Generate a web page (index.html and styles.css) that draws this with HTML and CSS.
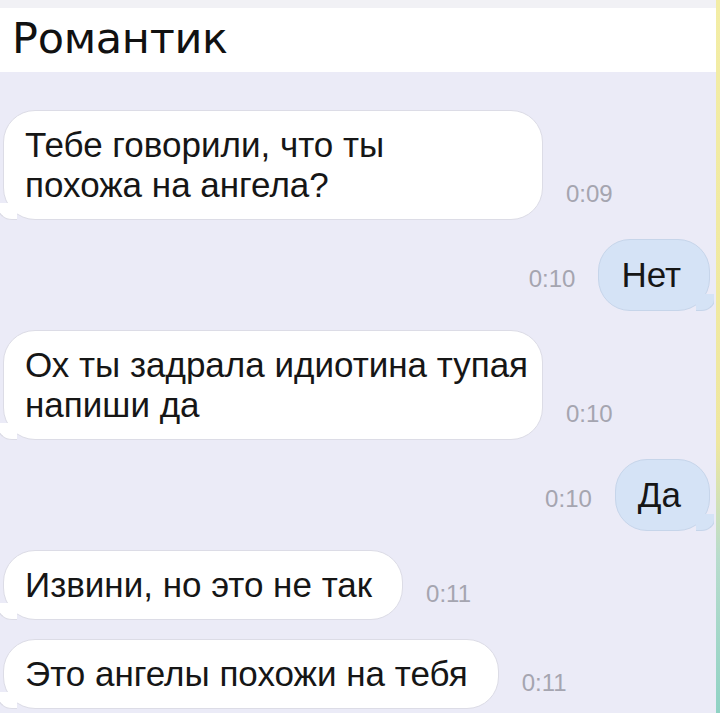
FILE: index.html
```html
<!DOCTYPE html>
<html>
<head>
  <meta charset="utf-8">
  <title>Романтик</title>
  <link rel="stylesheet" href="styles.css">
</head>
<body>
  <div class="page">
    <div class="topbar"></div>

    <header class="chat-header">
      <h1>Романтик</h1>
    </header>

    <main class="chat">
      <div class="row in">
        <div class="bubble wide">Тебе говорили, что ты<br>похожа на ангела?</div>
        <span class="time">0:09</span>
      </div>

      <div class="row out">
        <span class="time">0:10</span>
        <div class="bubble">Нет</div>
      </div>

      <div class="row in">
        <div class="bubble wide">Ох ты задрала идиотина тупая<br>напиши да</div>
        <span class="time">0:10</span>
      </div>

      <div class="row out">
        <span class="time">0:10</span>
        <div class="bubble">Да</div>
      </div>

      <div class="row in">
        <div class="bubble">Извини, но это не так</div>
        <span class="time">0:11</span>
      </div>

      <div class="row in">
        <div class="bubble">Это ангелы похожи на тебя</div>
        <span class="time">0:11</span>
      </div>
    </main>
  </div>
</body>
</html>
```

FILE: styles.css
```css
body {
  margin: 0;
  background: #ebebf7;
  font-family: "Liberation Sans", Arial, sans-serif;
  color: #161616;
}

.page {
  height: 713px;
  overflow: hidden;
  background: #ebebf7;
  border-right: 4px solid #efe9a0;
  border-image: linear-gradient(#f3eda6 0, #efe7a0 62%, #b8dccd 78%, #8fd2c4 100%) 1;
}

.topbar {
  height: 8px;
  background: #f1f1f5;
}

.chat-header {
  background: #fff;
  padding: 5px 12px 9px;
}

.chat-header h1 {
  margin: 0;
  font-family: "DejaVu Sans", Verdana, sans-serif;
  font-weight: normal;
  font-size: 43px;
  line-height: 50px;
  letter-spacing: -0.3px;
  color: #111;
}

.chat {
  display: flex;
  flex-direction: column;
  gap: 19px;
  padding: 38px 6px 0 3px;
}

.row {
  display: flex;
  gap: 23px;
}

.row.in {
  align-items: flex-end;
}

.row.out {
  justify-content: flex-end;
  align-items: baseline;
}

.bubble {
  position: relative;
  font-size: 35px;
  line-height: 40px;
  white-space: nowrap;
  border-radius: 32px;
}

.row.in .bubble {
  background: #fff;
  border: 1px solid #dcdce6;
  padding: 14px 30px 14px 21px;
}

.row.in .bubble.wide {
  box-sizing: border-box;
  width: 540px;
}

.row.out .bubble {
  background: #d5e3f6;
  border: 1px solid #c6d5ea;
  padding: 15px 28px 15px 22px;
}

/* tails */
.row.in .bubble::before {
  content: "";
  position: absolute;
  left: -6px;
  bottom: -1px;
  width: 18px;
  height: 16px;
  background: #fff;
  border-left: 1px solid #dcdce6;
  border-bottom: 1px solid #dcdce6;
  border-bottom-left-radius: 14px 12px;
}

.row.in .bubble::after {
  content: "";
  position: absolute;
  left: -13px;
  bottom: 0;
  width: 8px;
  height: 18px;
  background: #ebebf7;
  border-bottom-right-radius: 8px 6px;
}

.row.out .bubble::before {
  content: "";
  position: absolute;
  right: -6px;
  bottom: -1px;
  width: 18px;
  height: 16px;
  background: #d5e3f6;
  border-right: 1px solid #c6d5ea;
  border-bottom: 1px solid #c6d5ea;
  border-bottom-right-radius: 14px 12px;
}

.row.out .bubble::after {
  content: "";
  position: absolute;
  right: -13px;
  bottom: 0;
  width: 8px;
  height: 18px;
  background: #ebebf7;
  border-bottom-left-radius: 8px 6px;
}

.time {
  font-size: 24px;
  line-height: 28px;
  color: #a5a5b0;
}

.row.in .time {
  padding-bottom: 12px;
}
```
